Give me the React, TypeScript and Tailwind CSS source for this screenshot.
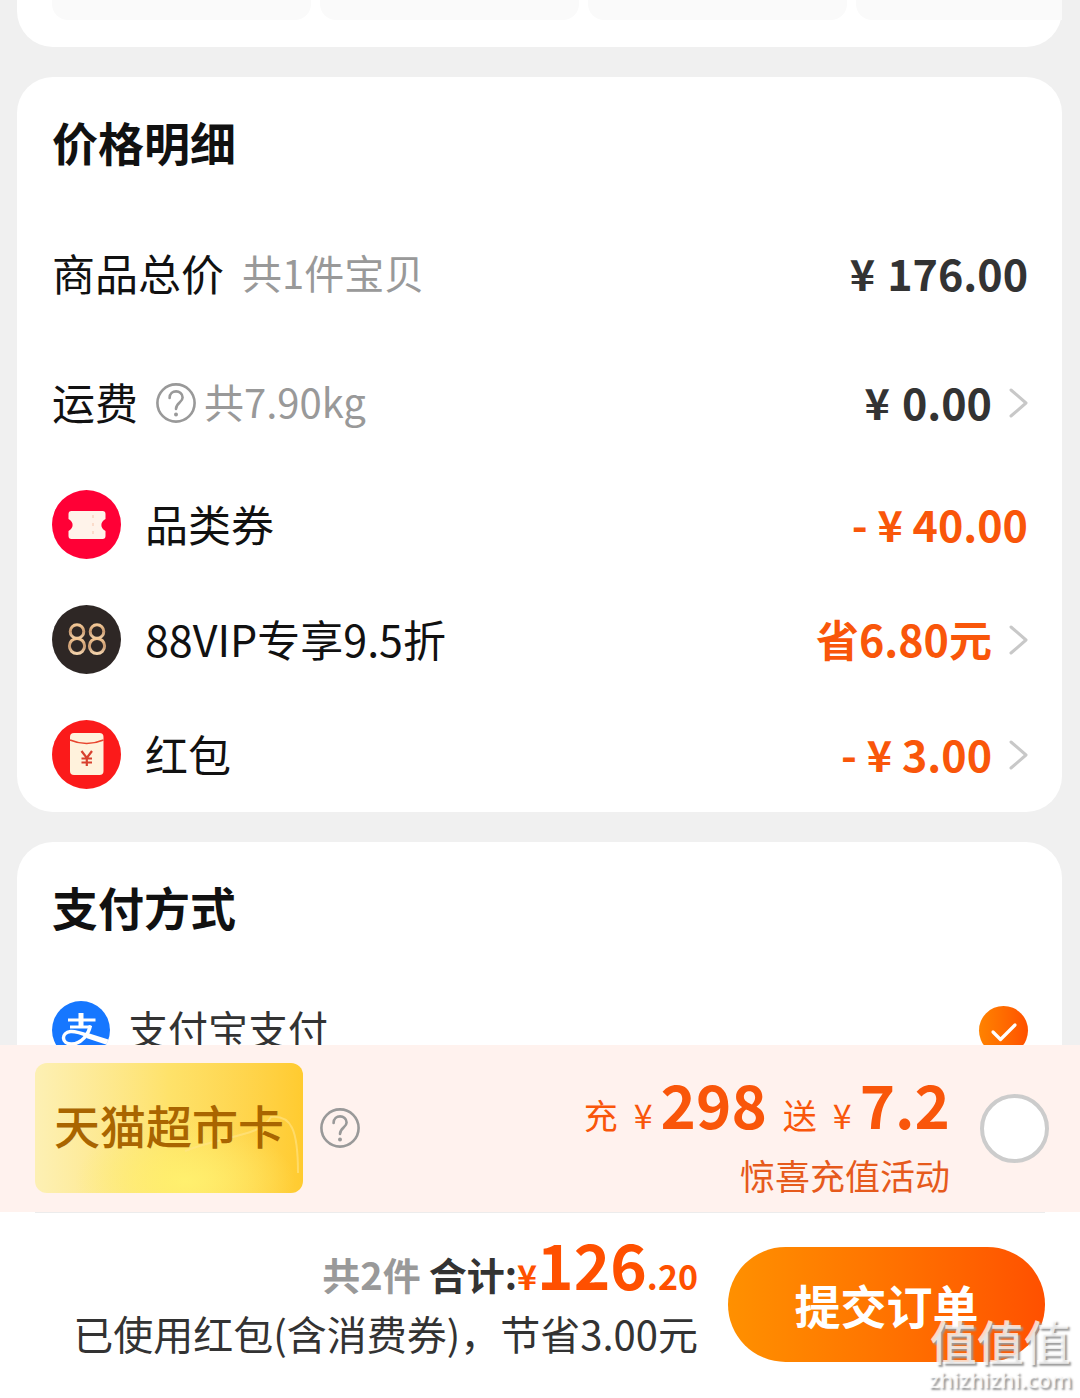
import type { ReactNode } from 'react';

const orange = 'text-[#f9560a]';

function Chevron() {
  return (
    <svg className="ml-4 h-8 w-5 shrink-0" viewBox="0 0 20 32" fill="none" stroke="#c8c8c8" strokeWidth="3" strokeLinecap="round" strokeLinejoin="round" aria-hidden="true">
      <path d="M3 3 L18 16 L3 29" />
    </svg>
  );
}

function HelpButton({ label }: { label: string }) {
  return (
    <button type="button" aria-label={label} className="shrink-0">
      <svg className="size-10" viewBox="0 0 40 40" fill="none" stroke="#999999" strokeWidth="2.6" strokeLinecap="round" aria-hidden="true">
        <circle cx="20" cy="20" r="18.6" />
        <path d="M13.6 15 C13.6 6 26.6 6.5 26.6 14.4 C26.6 19.5 20 19.5 20 26" />
        <circle cx="20" cy="31.6" r="2" fill="#999999" stroke="none" />
      </svg>
    </button>
  );
}

function CouponIcon() {
  return (
    <svg className="size-[69px] shrink-0" viewBox="0 0 69 69" aria-hidden="true">
      <circle cx="34.5" cy="34.5" r="34.5" fill="#ff0036" />
      <path d="M19.5 21 H50.5 Q53.5 21 53.5 24 V29 C48 32 48 38 53.5 41 V46 Q53.5 49 50.5 49 H19.5 Q16.5 49 16.5 46 V41 C22 38 22 32 16.5 29 V24 Q16.5 21 19.5 21 Z" fill="#fff3ea" />
      <path d="M41 25 V46" stroke="#fbdccb" strokeWidth="2" strokeDasharray="3 5" />
    </svg>
  );
}

function VipIcon() {
  return (
    <svg className="size-[69px] shrink-0" viewBox="0 0 69 69" aria-hidden="true">
      <defs>
        <linearGradient id="vip" x1="0" y1="0" x2="0" y2="1">
          <stop offset="0" stopColor="#f3c896" />
          <stop offset="0.5" stopColor="#c99a70" />
          <stop offset="1" stopColor="#f3d3ac" />
        </linearGradient>
      </defs>
      <circle cx="34.5" cy="34.5" r="34.5" fill="#2e2725" />
      <g fill="none" stroke="url(#vip)" strokeWidth="3">
        <circle cx="25" cy="26.5" r="6.8" />
        <circle cx="25" cy="41" r="7.6" />
        <circle cx="45" cy="26.5" r="6.8" />
        <circle cx="45" cy="41" r="7.6" />
      </g>
    </svg>
  );
}

function RedPacketIcon() {
  return (
    <svg className="size-[69px] shrink-0" viewBox="0 0 69 69" aria-hidden="true">
      <circle cx="34.5" cy="34.5" r="34.5" fill="#fb1a1a" />
      <rect x="18" y="13" width="33.5" height="42" rx="4" fill="#fff2dc" />
      <path d="M18 20 Q34.5 27 51.5 20" fill="none" stroke="#e8452f" strokeWidth="1.6" />
      <path d="M29.5 31 L34.8 38 L40 31 M34.8 38 V46 M29.5 38.5 H40 M29.5 42.5 H40" fill="none" stroke="#d8402e" strokeWidth="2.2" />
    </svg>
  );
}

function AlipayIcon() {
  return (
    <svg className="size-[58px] shrink-0" viewBox="0 0 58 58" aria-hidden="true">
      <defs>
        <clipPath id="alipay-disc">
          <circle cx="29" cy="29" r="29" />
        </clipPath>
      </defs>
      <circle cx="29" cy="29" r="29" fill="#1677ff" />
      <g clipPath="url(#alipay-disc)" fill="none" stroke="#ffffff">
        <path d="M16 19 H43.5 M18 26 H39" strokeWidth="3" />
        <path d="M29 12 V26" strokeWidth="5" />
        <path d="M38.5 24.5 C36.5 33 30 43 19.5 43 C9 43 9 31.500 18.500 30.500 C28 29.500 38 37 58 42" strokeWidth="3.4" />
        <path d="M35 34.500 L58 42" strokeWidth="5.5" />
      </g>
    </svg>
  );
}

function Card({ title, children }: { title: string; children: ReactNode }) {
  return (
    <section className="rounded-[36px] bg-white pr-[34px] pl-[35px]">
      <h2 className="flex h-[132px] items-center pb-1 text-[46px] leading-[56px] font-bold text-[#111111]">{title}</h2>
      {children}
    </section>
  );
}

type RowProps = {
  label: string;
  icon?: ReactNode;
  note?: ReactNode;
  amount: ReactNode;
  highlight?: boolean;
  arrow?: boolean;
};

function PriceRow({ label, icon, note, amount, highlight, arrow }: RowProps) {
  return (
    <li className={`flex items-center ${icon ? 'h-[115px]' : 'h-[129px]'}`}>
      {icon && <span className="mr-6">{icon}</span>}
      <span className="pb-1 text-[43px] leading-[56px] text-[#111111]">{label}</span>
      {note}
      <span className={`ml-auto flex pb-1 text-[43px] leading-[56px] font-bold ${highlight ? orange : 'text-[#333333]'}`}>{amount}</span>
      {arrow && <Chevron />}
    </li>
  );
}

export default function App() {
  return (
    <div className="relative flex h-screen flex-col overflow-hidden bg-[#f0f0f0] font-['Noto_Sans_CJK_SC',sans-serif]">
      <main className="flex min-h-0 flex-1 flex-col gap-[30px] overflow-hidden pr-[18px] pl-[17px]">
        <section className="shrink-0 rounded-b-[36px] bg-white pb-[27px] pl-[35px]">
          <div className="flex h-5 gap-[9px] overflow-hidden">
            {[0, 1, 2, 3].map((i) => (
              <div key={i} className="w-[259px] shrink-0 rounded-b-2xl bg-[#fafafa]" />
            ))}
          </div>
        </section>

        <Card title="价格明细">
          <ul>
            <PriceRow
              label="商品总价"
              note={<span className="ml-[18px] pb-1 text-[40px] leading-[56px] text-[#999999]">共1件宝贝</span>}
              amount={<><span className="mr-3">¥</span>176.00</>}
            />
            <PriceRow
              label="运费"
              note={
                <span className="ml-[18px] flex items-center gap-2 text-[40px] leading-[56px] text-[#999999]">
                  <HelpButton label="运费说明" />
                  <span className="pb-1">共7.90kg</span>
                </span>
              }
              amount={<><span className="mr-3">¥</span>0.00</>}
              arrow
            />
            <PriceRow label="品类券" icon={<CouponIcon />} amount="- ¥ 40.00" highlight />
            <PriceRow label="88VIP专享9.5折" icon={<VipIcon />} amount="省6.80元" highlight arrow />
            <PriceRow label="红包" icon={<RedPacketIcon />} amount="- ¥ 3.00" highlight arrow />
          </ul>
        </Card>

        <Card title="支付方式">
          <label className="flex h-[112px] items-center">
            <AlipayIcon />
            <span className="ml-[18px] pb-1 text-[40px] leading-[56px] text-[#333333]">支付宝支付</span>
            <span className="relative ml-auto size-[49px]">
              <input type="radio" name="pay" defaultChecked className="size-full appearance-none rounded-full bg-linear-to-r from-[#ff8200] to-[#ff5000]" />
              <svg className="pointer-events-none absolute inset-0" viewBox="0 0 49 49" fill="none" stroke="#ffffff" strokeWidth="3.2" strokeLinecap="round" strokeLinejoin="round" aria-hidden="true">
                <path d="M14 26 L21.5 33.5 L36 19" />
              </svg>
            </span>
          </label>
        </Card>
      </main>

      <footer className="shrink-0 bg-white">
        <div className="flex items-center bg-[#fff2ee] pt-[18px] pr-[31px] pb-[19px] pl-[35px]">
          <div className="relative flex h-[130px] w-[268px] items-center justify-center overflow-hidden rounded-xl bg-linear-to-r from-[#fdf0b4] via-[#fee26a] to-[#ffcb2f]">
            <svg className="absolute inset-0 size-full" viewBox="0 0 268 130" preserveAspectRatio="none" aria-hidden="true">
              <defs>
                <radialGradient id="shine">
                  <stop offset="0" stopColor="#fff06e" />
                  <stop offset="1" stopColor="#fff06e" stopOpacity="0" />
                </radialGradient>
              </defs>
              <ellipse cx="150" cy="118" rx="110" ry="60" fill="url(#shine)" />
              <path d="M150 88 C190 72 225 74 236 54 C256 52 263 66 263 110" fill="none" stroke="#ffe58a" strokeWidth="2" opacity="0.6" />
            </svg>
            <span className="relative pb-2 text-[46px] leading-[56px] font-medium text-[#a96500]">天猫超市卡</span>
          </div>
          <span className="ml-[17px] flex">
            <HelpButton label="超市卡说明" />
          </span>
          <label htmlFor="recharge" className={`ml-auto flex flex-col items-end self-end ${orange}`}>
            <span className="flex items-baseline text-[34px] leading-[60px]">
              充<span className="ml-4">¥</span>
              <span className="ml-2 text-[60px] font-bold">298</span>
              <span className="ml-4">送</span>
              <span className="ml-4">¥</span>
              <span className="ml-2 text-[60px] font-bold">7.2</span>
            </span>
            <span className="mt-3 text-[35px] leading-[36px] text-[#e65a1c]">惊喜充值活动</span>
          </label>
          <input id="recharge" type="checkbox" className="ml-[30px] size-[69px] shrink-0 appearance-none rounded-full border-4 border-[#cccccc] bg-white" />
        </div>
        <div className="mx-[35px] h-px bg-[#ececec]" />

        <div className="flex items-start justify-end pt-5 pr-[35px] pb-9">
          <div className="flex flex-col items-end">
            <p className="flex items-baseline text-[38px] leading-[60px] font-bold">
              <span className="text-[#999999]">共2件</span>
              <span className="ml-2 text-[#333333]">合计:</span>
              <span className="text-[34px] text-[#ff5000]">¥</span>
              <span className="text-[62px] text-[#ff5000]">126</span>
              <span className="text-[34px] text-[#ff5000]">.20</span>
            </p>
            <p className="text-[40px] leading-[54px] text-[#333333]">已使用红包(含消费券)，节省3.00元</p>
          </div>
          <button type="button" className="mt-[14px] ml-[30px] h-[115px] w-[317px] shrink-0 rounded-full bg-linear-to-r from-[#ff9000] to-[#ff5000] text-[46px] font-bold text-white">
            提交订单
          </button>
        </div>
      </footer>

      <div className="pointer-events-none absolute right-2 bottom-1.5 flex flex-col items-center text-white/75 [text-shadow:2px_2px_2px_#999999]">
        <span className="text-[47px] leading-[52px] font-medium">值值值</span>
        <span className="font-['Open_Sans',sans-serif] text-[22px] leading-[26px] font-semibold">zhizhizhi.com</span>
      </div>
    </div>
  );
}
